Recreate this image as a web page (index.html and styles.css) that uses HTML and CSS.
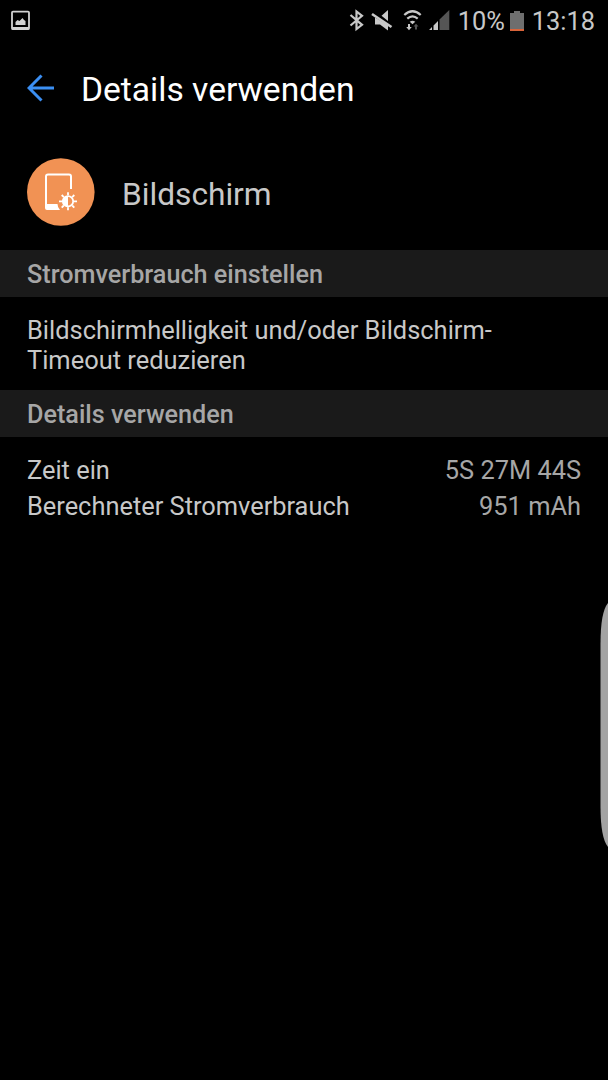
FILE: index.html
```html
<!DOCTYPE html>
<html lang="de">
<head>
<meta charset="utf-8">
<title>Details verwenden</title>
<link rel="stylesheet" href="styles.css">
</head>
<body>
<div class="screen">
  <div class="status">
    <svg class="notification" width="20" height="22" viewBox="0 0 20 22"><rect x="1" y="1.6" width="17" height="17.6" rx="1" fill="none" stroke="#d2d2d2" stroke-width="1.8"/><path d="M1 17h17v2.500H1z" fill="#d2d2d2"/><path d="M4.500 15v-3l2-2 2 1 3-3 1.500 2 1.500 1v4z" fill="#d2d2d2"/></svg>
    <div class="indicators">
      <svg class="signals" width="102" height="24" viewBox="348 8 102 24">
        <path d="M350.500 15l11.500 9.800-5.500 4.200V11.500l5.500 4.300-11.500 9.700" fill="none" stroke="#c8c8c8" stroke-width="2.200"/>
        <path d="M381.500 15.800l6.500-5.800v11zM375 17.500V24.500h5l8 6V25z" fill="#c8c8c8"/>
        <path d="M372 14l19.500 13" stroke="#c8c8c8" stroke-width="2.600"/>
        <path d="M404.300 15q8.200-7.500 16.400 0M407.300 18.600q5.200-4.600 10.400 0" fill="none" stroke="#c8c8c8" stroke-width="2.200"/>
        <path d="M409.700 21.800q2.800-2 5.600 0l-2.800 2.400z" fill="#c8c8c8"/>
        <path d="M408 24h2v3h1.800l-2.800 3.200-2.800-3.200h1.800z" fill="#c8c8c8"/>
        <path d="M415 29.500v-3h-1.500l2.500-2.800 2.500 2.800H417v3z" fill="#555"/>
        <path d="M429 30l3-3v3zM433.500 30v-4.500l4.500-4.500v9z" fill="#c8c8c8"/>
        <path d="M439.500 30V19.500l9.800-9.500v20z" fill="#555"/>
      </svg>
      <span class="percent">10%</span>
      <svg class="battery" width="14" height="22" viewBox="0 0 14 22"><path d="M4 1h6v2h4v18H0V3h4z" fill="#6e6e6e"/><path d="M0 19h14v2H0z" fill="#d9643a"/></svg>
      <span class="clock">13:18</span>
    </div>
  </div>
  <header class="header">
    <svg class="back" width="28" height="28" viewBox="0 0 28 28"><path d="M27 14H2M14.500 1.500L2 14l12.500 12.500" fill="none" stroke="#3b8ff3" stroke-width="3"/></svg>
    <h1 class="title">Details verwenden</h1>
  </header>
  <div class="app">
    <svg class="app-icon" width="68" height="68" viewBox="0 0 68 68">
      <circle cx="33.800" cy="34" r="33.800" fill="#f19254"/>
      <path d="M44 31V18.500q0-2-2-2H21q-2 0-2 2V48" fill="none" stroke="#fff" stroke-width="2"/>
      <path d="M18 46h12.500q0 3.500 2.500 6H20q-2 0-2-2z" fill="#fff"/>
      <circle cx="41" cy="43.300" r="5.200" fill="none" stroke="#fff" stroke-width="1.800"/>
      <path d="M41 38v10.600a5.300 5.300 0 0 1 0-10.600z" fill="#fff"/>
      <path d="M41 34.300v3M41 49.300v3M32 43.300h3M47 43.300h3M34.700 37l2.100 2.100M45.200 47.500l2.100 2.100M34.700 49.600l2.100-2.100M45.200 39.100l2.100-2.100" stroke="#fff" stroke-width="1.800"/>
    </svg>
    <span class="app-name">Bildschirm</span>
  </div>
  <h2 class="section">Stromverbrauch einstellen</h2>
  <p class="hint">Bildschirmhelligkeit und/oder Bildschirm-<br>Timeout reduzieren</p>
  <h2 class="section">Details verwenden</h2>
  <dl class="stats">
    <div class="stat"><dt>Zeit ein</dt><dd>5S 27M 44S</dd></div>
    <div class="stat"><dt>Berechneter Stromverbrauch</dt><dd>951 mAh</dd></div>
  </dl>
  <svg class="edge-handle" width="8" height="246" viewBox="0 0 8 246"><path d="M8 1Q.5 10 .5 42V204Q.5 236 8 245z" fill="#a3a3a3"/></svg>
</div>
</body>
</html>
```
FILE: styles.css
```css
* { box-sizing: border-box; }
body { margin: 0; background: #000; }
.screen {
  position: relative;
  height: 1080px;
  overflow: hidden;
  background: #000;
  color: #c8c8c8;
  font: 400 25.4px/30px Roboto, sans-serif;
}
.status {
  display: flex;
  justify-content: space-between;
  align-items: center;
  height: 42px;
  padding: 0 13px 0 11px;
}
.notification { margin-bottom: 1px; }
.battery { margin: 0 0 1px 5px; }
.indicators { display: flex; align-items: center; }
.signals { margin-bottom: 2px; }
.percent { margin-left: 8px; }
.clock { margin-left: 8px; }
.header {
  display: flex;
  align-items: center;
  gap: 26px;
  height: 94px;
  padding-left: 27px;
}
.back { margin-bottom: 3px; }
.title {
  margin: 0;
  padding-top: 2px;
  color: #fff;
  font-weight: 400;
  font-size: 33.6px;
  line-height: 40px;
}
.app {
  display: flex;
  align-items: center;
  gap: 27px;
  height: 114px;
  padding-left: 27px;
}
.app-icon { margin-bottom: 1.5px; }
.app-name { padding-top: 3px; font-size: 31.7px; line-height: 40px; }
.section {
  height: 47px;
  margin: 0;
  padding: 1px 27px 0;
  background: #1a1a1a;
  color: #a6a6a6;
  font-weight: 500;
  font-size: 25.2px;
  line-height: 47px;
}
.hint { height: 92.5px; margin: 0; padding: 18px 27px 0; font-size: 25.45px; }
.stats { display: grid; gap: 6px; margin: 0; padding: 18px 27px 0; }
.stat { display: flex; justify-content: space-between; }
.stat dd { margin: 0; color: #a6a6a6; }
.edge-handle { position: absolute; right: 0; top: 602px; }
```
